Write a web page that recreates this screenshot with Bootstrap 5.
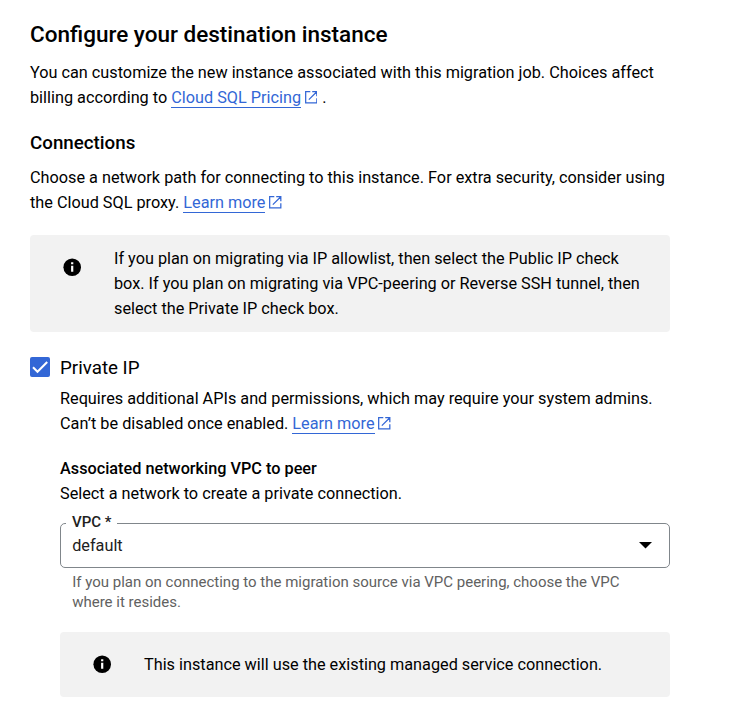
<!DOCTYPE html>
<html lang="en">
<head>
<meta charset="utf-8">
<meta name="viewport" content="width=device-width, initial-scale=1">
<title>Configure your destination instance</title>
<link href="https://cdn.jsdelivr.net/npm/bootstrap@5.3.0/dist/css/bootstrap.min.css" rel="stylesheet">
<style>
body{font-family:Roboto,"Liberation Sans",sans-serif;font-size:16.25px;line-height:25px;color:#000;background:#fff}
.page{width:740px;padding:20px 70px 0 30px}
.page-title{font-size:22.5px;line-height:28px;font-weight:500;margin-bottom:12px}
.section-title{font-size:18.75px;line-height:24px;font-weight:500;margin:21px 0 10px}
.doc-link{color:#3367d6;text-decoration:none;border-bottom:1px solid #3367d6}
.ext{width:12.5px;height:12.5px;margin:0 .9px 0 -.3px;fill:none;stroke:#3367d6;stroke-width:1.3;vertical-align:-.5px}
.notice{background:#f2f2f2;border-radius:4px;margin-top:20px;padding:11px 30px 11px 32px;column-gap:32px}
.notice-single{padding-top:20px;padding-bottom:20px}
.notice-icon{width:20px;height:20px}
.first-icon{margin-top:11px}
.single-icon{margin-top:2px}
.option{margin-top:25px;height:20px;column-gap:10px}
.option-label{font-size:18.75px;padding-top:2px}
.indent{margin-left:30px}
.option-text{margin-top:9px}
.field-title{font-weight:500;margin-top:20px}
.vpc{height:45px;border:1px solid #80868b;border-radius:5px;margin-top:17px;padding:0 17px 0 11.2px;color:#212121}
.vpc-label{left:5px;top:-10px;line-height:16px;font-size:15px;font-weight:500;background:#fff;padding:0 6px}
.hint{font-size:15px;line-height:20px;color:#616161;margin:4px 0 0 12.2px}
</style>
</head>
<body>
<main class="page text-nowrap">
  <h1 class="page-title">Configure your destination instance</h1>
  <p class="mb-0">You can customize the new instance associated with this migration job. Choices affect<br>billing according to <a class="doc-link" href="#">Cloud SQL Pricing</a> <svg class="ext" viewBox="0 0 13 13"><path d="M5.5.7H.7v11.6h11.6V7.5M7.5.7h4.8v4.8M12 1L4 9"/></svg> .</p>
  <h2 class="section-title">Connections</h2>
  <p class="mb-0">Choose a network path for connecting to this instance. For extra security, consider using<br>the Cloud SQL proxy. <a class="doc-link" href="#">Learn more</a> <svg class="ext" viewBox="0 0 13 13"><path d="M5.5.7H.7v11.6h11.6V7.5M7.5.7h4.8v4.8M12 1L4 9"/></svg></p>

  <div class="notice d-flex align-items-start">
    <svg class="notice-icon first-icon flex-shrink-0" viewBox="0 0 20 20"><circle cx="10.2" cy="10.2" r="8.8"/><path fill="#fff" d="M9.1 5.3h2.2v2H9.1zM9.1 8.7h2.2v6H9.1z"/></svg>
    <div>If you plan on migrating via IP allowlist, then select the Public IP check<br>box. If you plan on migrating via VPC-peering or Reverse SSH tunnel, then<br>select the Private IP check box.</div>
  </div>

  <div class="option d-flex align-items-center">
    <svg width="20" height="20" viewBox="0 0 20 20"><rect width="20" height="20" rx="2" fill="#3367d6"/><path d="M3 10.2l4.5 4.6L17.2 5" fill="none" stroke="#fff" stroke-width="2"/></svg>
    <span class="option-label">Private IP</span>
  </div>

  <section class="indent">
    <p class="option-text mb-0">Requires additional APIs and permissions, which may require your system admins.<br>Can’t be disabled once enabled. <a class="doc-link" href="#">Learn more</a> <svg class="ext" viewBox="0 0 13 13"><path d="M5.5.7H.7v11.6h11.6V7.5M7.5.7h4.8v4.8M12 1L4 9"/></svg></p>
    <div class="field-title">Associated networking VPC to peer</div>
    <div>Select a network to create a private connection.</div>
    <div class="vpc position-relative d-flex align-items-center justify-content-between" role="combobox" aria-label="VPC">
      <span class="vpc-label position-absolute">VPC *</span>
      <span>default</span>
      <svg width="13" height="7" viewBox="0 0 13 7"><path d="M0 0h13L6.5 6.5z"/></svg>
    </div>
    <div class="hint">If you plan on connecting to the migration source via VPC peering, choose the VPC<br>where it resides.</div>
    <div class="notice notice-single d-flex align-items-start">
      <svg class="notice-icon single-icon flex-shrink-0" viewBox="0 0 20 20"><circle cx="10.2" cy="10.2" r="8.8"/><path fill="#fff" d="M9.1 5.3h2.2v2H9.1zM9.1 8.7h2.2v6H9.1z"/></svg>
      <div>This instance will use the existing managed service connection.</div>
    </div>
  </section>
</main>
<script src="https://cdn.jsdelivr.net/npm/bootstrap@5.3.0/dist/js/bootstrap.bundle.min.js"></script>
</body>
</html>
